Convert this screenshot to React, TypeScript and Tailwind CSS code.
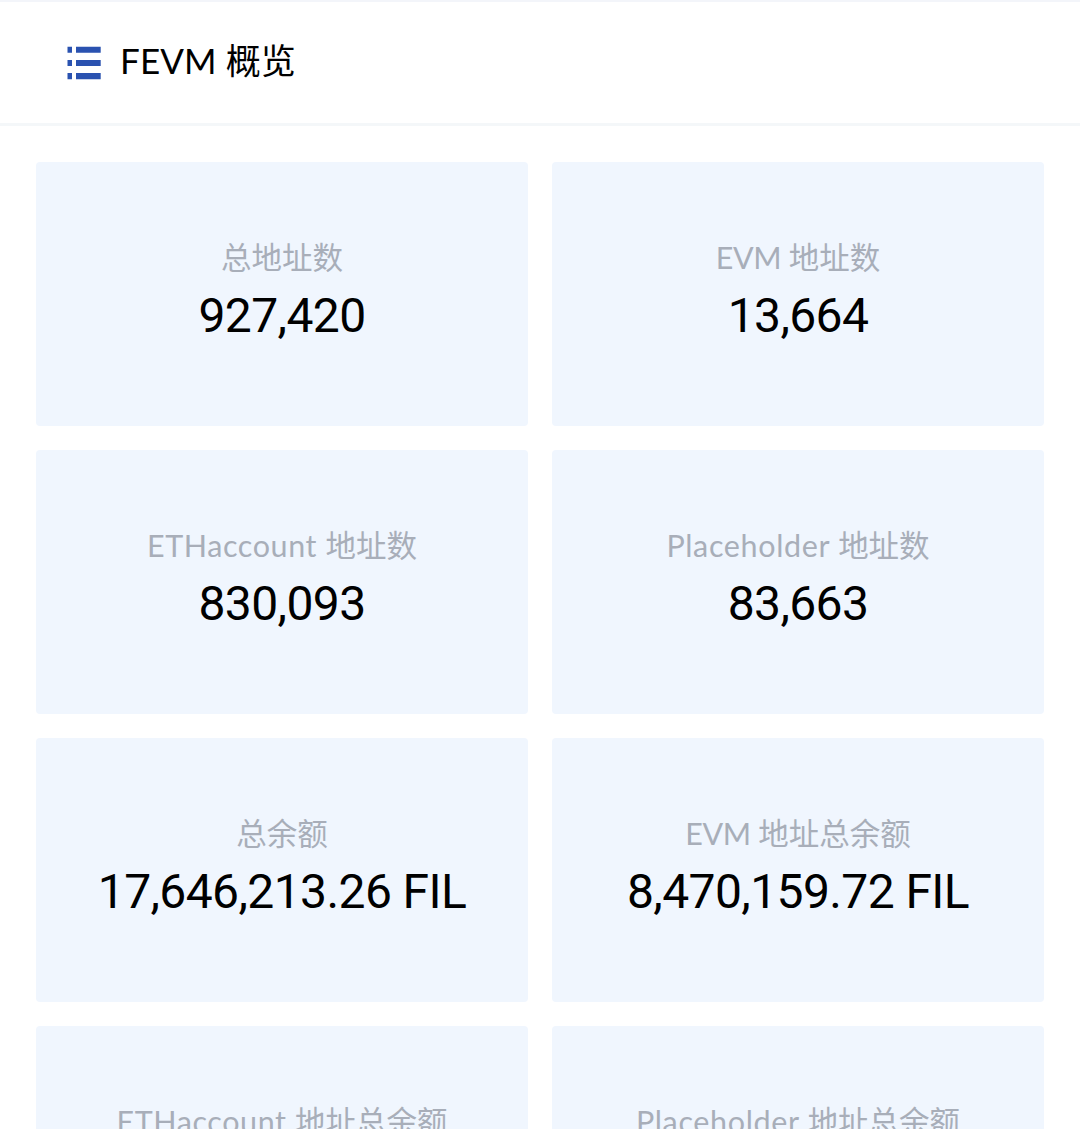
const cards = [
  { latin: "", label: "总地址数", value: "927,420", spacing: "" },
  { latin: "EVM", label: "地址数", value: "13,664", spacing: "tracking-[-0.3px]" },
  { latin: "ETHaccount", label: "地址数", value: "830,093", spacing: "tracking-[0.6px]" },
  { latin: "Placeholder", label: "地址数", value: "83,663", spacing: "tracking-[0.65px]" },
  { latin: "", label: "总余额", value: "17,646,213.26 FIL", spacing: "" },
  { latin: "EVM", label: "地址总余额", value: "8,470,159.72 FIL", spacing: "tracking-[-0.3px]" },
  { latin: "ETHaccount", label: "地址总余额", value: "", spacing: "tracking-[0.6px]" },
  { latin: "Placeholder", label: "地址总余额", value: "", spacing: "tracking-[0.65px]" },
];

function ListIcon() {
  return (
    <svg className="h-[34px] w-[34px] shrink-0" viewBox="0 0 34 34" fill="#2a52b0">
      <path d="M.5 .7h4.5v6H.5zM9 .7h24.7v6H9zM.5 14h4.5v6H.5zM9 14h24.7v6H9zM.5 27h4.5v6.3H.5zM9 27h24.7v6.3H9z" />
    </svg>
  );
}

export default function App() {
  return (
    <div className="h-[1129px] w-[1080px] overflow-hidden border-t-2 border-[#f3f5fa] bg-white font-['Lato','Noto_Sans_CJK_SC',sans-serif]">
      <header className="flex h-[124px] items-center gap-5 border-b-3 border-[#f4f7f9] pl-[67px]">
        <ListIcon />
        <h1 className="-ml-px pb-1.5 text-[35px] leading-[50px] tracking-[0.1px] text-black">FEVM 概览</h1>
      </header>
      <main className="grid grid-cols-2 gap-6 px-9 pt-9">
        {cards.map(({ latin, label, value, spacing }) => (
          <section key={latin + label} className="flex h-[264px] flex-col items-center rounded bg-[#f0f6fe] pt-[71px] whitespace-nowrap">
            <h2 className="text-[30.5px] leading-[48px] text-[#a8aeb9]">
              {latin && <span className={spacing}>{latin} </span>}
              {label}
            </h2>
            <p className="mt-0.5 font-['Roboto',sans-serif] text-[48px] leading-[66px] tracking-[-0.6px] text-black">{value}</p>
          </section>
        ))}
      </main>
    </div>
  );
}
